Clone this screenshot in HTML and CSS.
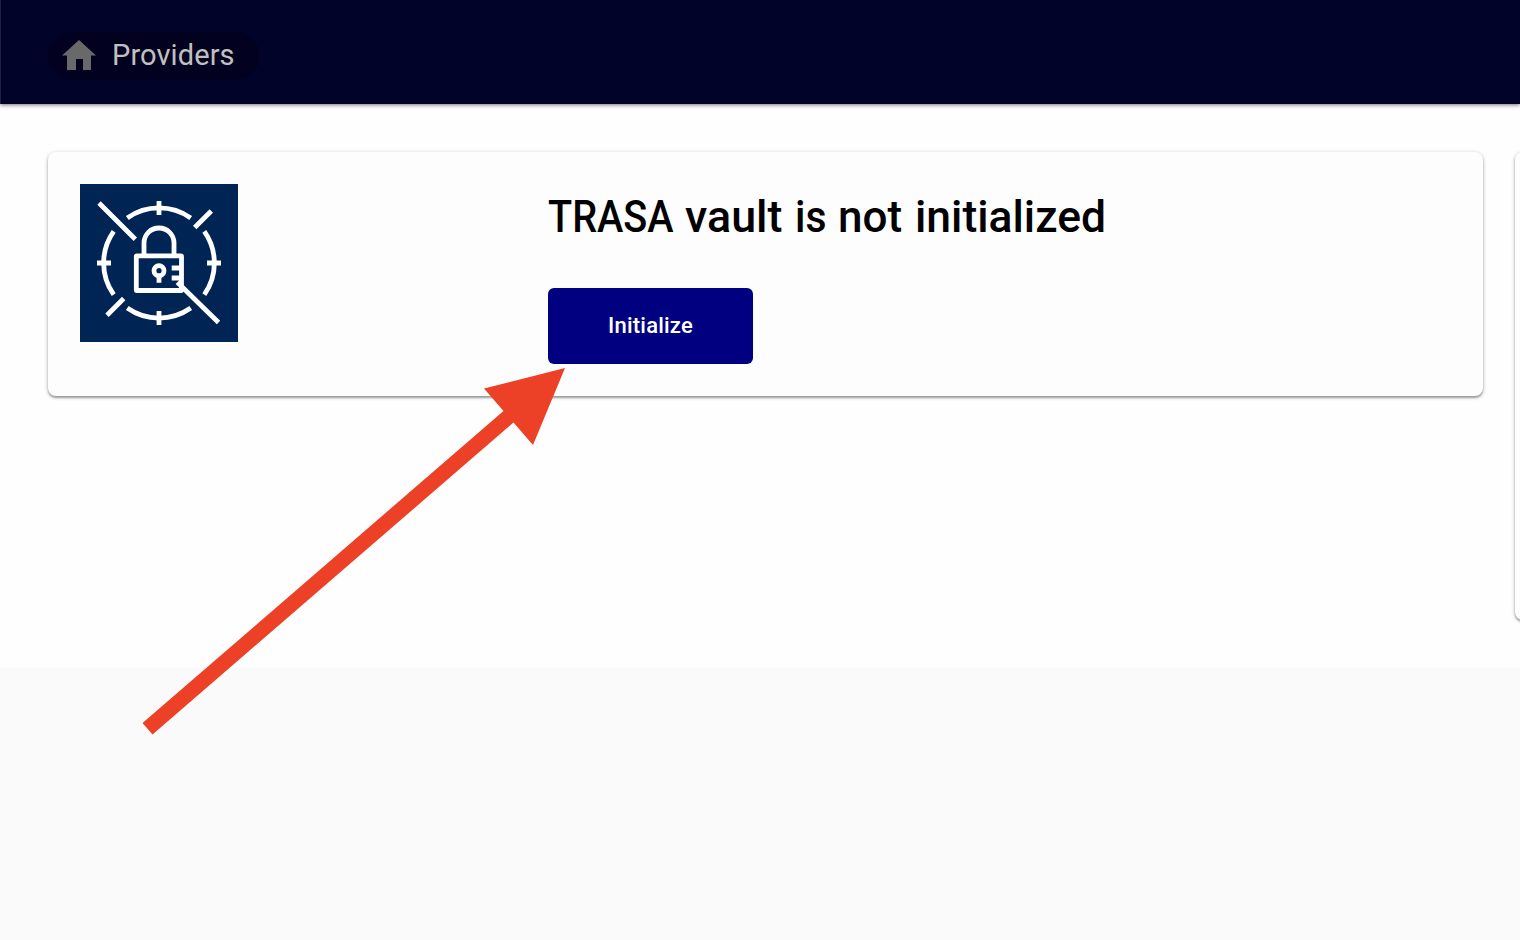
FILE: index.html
```html
<!DOCTYPE html>
<html lang="en">
<head>
<meta charset="utf-8">
<title>Providers</title>
<link rel="stylesheet" href="styles.css">
</head>
<body>
<header class="topbar">
  <a class="crumb">
    <svg class="home" viewBox="0 0 34 30"><path d="M17 0 34 15.5H29V30H21V19H14V30H5V15.5H0Z"/></svg>
    <span class="crumb-label">Providers</span>
  </a>
</header>
<main class="content">
  <section class="card vault">
    <svg class="logo" viewBox="0 0 158 158">
      <path d="M47.3 34A55 55 0 0 1 110.7 34M124.3 47.3A55 55 0 0 1 124.3 110.7M110.7 124A55 55 0 0 1 47.3 124M33.7 110.7A55 55 0 0 1 33.7 47.3"/>
      <path d="M79 17V31M79 127V141M17 79H31M127 79H141M19 19 55.3 55.3M131.3 27 114.7 43.5M27 131.3 43.7 114.5M97.3 98.3 138.5 138.5"/>
      <path d="M64 70V59A15 15 0 0 1 94 59V70"/>
      <rect x="56.3" y="71.9" width="45.2" height="34.6" rx=".5"/>
      <circle cx="79" cy="86.7" r="5"/>
      <path d="M79 91V98.7M91.7 84H101M91.7 94H101"/>
    </svg>
    <div class="details">
      <h1 class="title"><span class="w1">TRASA</span> <span class="w2">vault</span> <span class="w3">is</span> <span class="w4">not</span> <span class="w5">initialized</span></h1>
      <button class="button">Initialize</button>
    </div>
  </section>
  <section class="card next"></section>
</main>
<svg class="arrow" viewBox="0 0 1520 940"><path d="M565 368 533 445 513.5 422.5 152.5 734.5 142.5 723 503.5 411 484 388.5Z"/></svg>
</body>
</html>
```
FILE: styles.css
```css
* { box-sizing: border-box; }
body {
  margin: 0;
  height: 940px;
  overflow: hidden;
  position: relative;
  background: #fafafa;
  font-family: Roboto, sans-serif;
}
.topbar {
  position: relative;
  height: 104px;
  padding: 32px 48px;
  background: #020329;
  border-left: 1px solid #20203f;
  box-shadow: 0 1px 4px rgba(0, 0, 0, .55);
}
.crumb {
  display: flex;
  align-items: center;
  width: 211px;
  height: 48px;
  margin-left: -1px;
  padding: 0 0 2px 14px;
  gap: 16px;
  border-radius: 24px;
  background: #020220;
}
.home { width: 34px; height: 30px; fill: #696969; }
.crumb-label { font-size: 29px; line-height: 46px; color: #c0c0c0; letter-spacing: .1px; }
.content {
  display: flex;
  align-items: flex-start;
  gap: 32px;
  height: 564px;
  padding: 48px 0 48px 48px;
  overflow: hidden;
  background: #fefefe;
}
.card {
  flex: none;
  border-radius: 8px;
  background: #fdfdfd;
  box-shadow: 0 2px 2px rgba(0, 0, 0, .28), 0 1px 4px rgba(0, 0, 0, .24);
}
.vault { display: flex; width: 1435px; height: 244px; padding: 32px; }
.next { width: 480px; height: 468px; }
.logo {
  width: 158px;
  height: 158px;
  margin-right: 310px;
  background: #002454;
  fill: none;
  stroke: #fff;
  stroke-width: 4.8;
}
.title {
  display: flex;
  margin: 0;
  height: 104px;
  line-height: 66px;
  font-size: 44px;
  font-weight: 500;
  color: #000;
  white-space: nowrap;
}
.title span { display: block; transform-origin: 0 50%; }
.w1 { width: 137px; transform: scaleX(.9); }
.w2 { width: 110px; transform: scaleX(1.02); }
.w3 { width: 43px; transform: scaleX(.93); }
.w4 { width: 77px; }
.w5 { width: 190px; transform: scaleX(1.01); }
.button {
  display: block;
  width: 205px;
  height: 76px;
  padding: 0;
  border: 0;
  border-radius: 6px;
  background: #000080;
  color: #fff;
  font: 500 22px/74px Roboto, sans-serif;
  letter-spacing: .2px;
}
.arrow { position: absolute; left: 0; top: 0; width: 1520px; height: 940px; fill: #ec4127; }
```
